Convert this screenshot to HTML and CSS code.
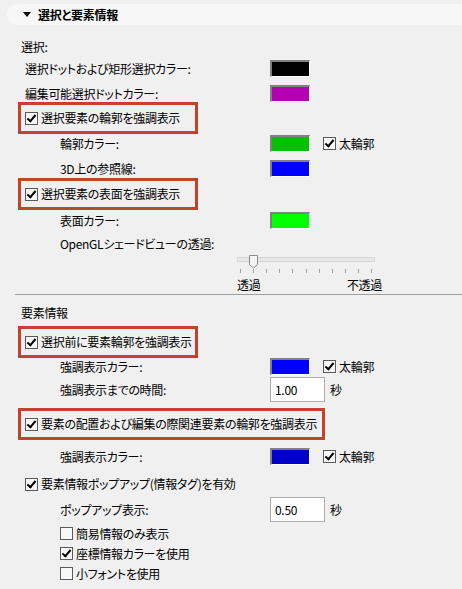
FILE: index.html
```html
<!DOCTYPE html>
<html lang="ja">
  <head>
    <meta charset="UTF-8" />
    <title>選択と要素情報</title>
    <link rel="stylesheet" href="styles.css">
  </head>
  <body>
    <div class="panel-head">
      <span class="caret"></span>
      <span class="panel-title">選択と要素情報</span>
    </div>

    <div class="cap cap-first">選択:</div>
    <div class="row first">
      <span class="label">選択ドットおよび矩形選択カラー:</span>
      <span class="swatch black"></span>
    </div>
    <div class="row">
      <span class="label">編集可能選択ドットカラー:</span>
      <span class="swatch magenta"></span>
    </div>
    <div class="hl">
      <span class="cb on"></span>選択要素の輪郭を強調表示
    </div>
    <div class="row sub after-hl">
      <span class="label">輪郭カラー:</span>
      <span class="swatch green"></span>
      <span class="check"><span class="cb on"></span>太輪郭</span>
    </div>
    <div class="row sub">
      <span class="label">3D上の参照線:</span>
      <span class="swatch blue"></span>
    </div>
    <div class="hl hl-2">
      <span class="cb on"></span>選択要素の表面を強調表示
    </div>
    <div class="row sub after-hl2">
      <span class="label">表面カラー:</span>
      <span class="swatch lime"></span>
    </div>
    <div class="cap sub-cap">OpenGLシェードビューの透過:</div>
    <div class="slider">
      <svg width="142" height="20" viewBox="0 0 142 20">
        <rect x="1.5" y="3.5" width="137" height="4" fill="#e7e7e7" stroke="#d6d6d6" />
        <g stroke="#a0a0a0">
          <line x1="4.5" y1="15" x2="4.5" y2="19" />
          <line x1="17.5" y1="15" x2="17.5" y2="19" />
          <line x1="30.5" y1="15" x2="30.5" y2="19" />
          <line x1="43.5" y1="15" x2="43.5" y2="19" />
          <line x1="56.5" y1="15" x2="56.5" y2="19" />
          <line x1="70.5" y1="15" x2="70.5" y2="19" />
          <line x1="83.5" y1="15" x2="83.5" y2="19" />
          <line x1="96.5" y1="15" x2="96.5" y2="19" />
          <line x1="109.5" y1="15" x2="109.5" y2="19" />
          <line x1="122.5" y1="15" x2="122.5" y2="19" />
          <line x1="135.5" y1="15" x2="135.5" y2="19" />
        </g>
        <path d="M13.5 1.5 H21.5 V10.5 L17.5 14 L13.5 10.5 Z" fill="#f4f4f4" stroke="#8a8a8a" />
      </svg>
    </div>
    <div class="slider-labels">
      <span>透過</span>
      <span>不透過</span>
    </div>

    <hr class="sep" />

    <div class="cap cap-info">要素情報</div>
    <div class="hl hl-3">
      <span class="cb on"></span>選択前に要素輪郭を強調表示
    </div>
    <div class="row sub after-hl3">
      <span class="label">強調表示カラー:</span>
      <span class="swatch blue"></span>
      <span class="check"><span class="cb on"></span>太輪郭</span>
    </div>
    <div class="row sub field-row">
      <span class="label">強調表示までの時間:</span>
      <span class="field">1.00</span>
      <span class="unit">秒</span>
    </div>
    <div class="hl hl-wide">
      <span class="cb on"></span>要素の配置および編集の際関連要素の輪郭を強調表示
    </div>
    <div class="row sub">
      <span class="label">強調表示カラー:</span>
      <span class="swatch navy"></span>
      <span class="check"><span class="cb on"></span>太輪郭</span>
    </div>
    <div class="check popup">
      <span class="cb on"></span>要素情報ポップアップ(情報タグ)を有効
    </div>
    <div class="row sub field-row popup-field">
      <span class="label">ポップアップ表示:</span>
      <span class="field">0.50</span>
      <span class="unit">秒</span>
    </div>
    <div class="check opt first-opt"><span class="cb"></span>簡易情報のみ表示</div>
    <div class="check opt"><span class="cb on"></span>座標情報カラーを使用</div>
    <div class="check opt"><span class="cb"></span>小フォントを使用</div>
  </body>
</html>
```

FILE: styles.css
```css
body {
  margin: 0;
  background: #f0f0f0;
  color: #000;
  font-family: "Noto Sans CJK JP", "Noto Sans", sans-serif;
  font-feature-settings: "palt";
  font-size: 12px;
  line-height: 16px;
  letter-spacing: -0.3px;
  width: 462px;
  height: 589px;
  overflow: hidden;
}

.panel-head {
  margin: 4px 0 0 7px;
  height: 21px;
  background: #f7f7f7;
  border-radius: 10px 0 0 10px;
  display: flex;
  align-items: center;
}
.caret {
  width: 0;
  height: 0;
  margin-left: 16px;
  border-left: 4px solid transparent;
  border-right: 4px solid transparent;
  border-top: 5px solid #000;
}
.panel-title {
  margin-left: 7px;
  font-weight: bold;
}

.cap {
  height: 16px;
  padding-left: 21px;
}
.cap-first {
  margin-top: 14px;
}
.sub-cap {
  margin-top: 7px;
  padding-left: 60px;
}
.cap-info {
  margin-top: 10px;
}

.row {
  display: grid;
  grid-template-columns: 270px auto auto 1fr;
  align-items: center;
  height: 17px;
  margin-top: 8px;
}
.row .label {
  padding-left: 25px;
}
.row.sub .label {
  padding-left: 60px;
}
.row.first {
  margin-top: 5px;
}
.after-hl {
  margin-top: 1px;
}
.after-hl2 {
  margin-top: 2px;
}
.after-hl3 {
  margin-top: 0;
}
.field-row {
  height: 25px;
  margin-top: 2px;
}
.popup-field {
  margin-top: 5px;
}

.swatch {
  width: 40px;
  height: 17px;
  box-sizing: border-box;
  border-top: 2px solid #808080;
  border-left: 2px solid #808080;
  border-right: 1px solid #fff;
  border-bottom: 1px solid #fff;
  margin-right: 13px;
}
.black { background: #000; }
.magenta { background: #b400b4; }
.green { background: #00c000; }
.blue { background: #0000ff; }
.lime { background: #00ff00; }
.navy { background: #0000c8; }

.field {
  width: 55px;
  height: 25px;
  box-sizing: border-box;
  background: #fff;
  border: 1px solid #adadad;
  padding-left: 4px;
  line-height: 23px;
  margin-right: 5px;
}

.cb {
  display: inline-block;
  position: relative;
  width: 13px;
  height: 13px;
  box-sizing: border-box;
  border: 1px solid #5a5a5a;
  background: #f8f8f8;
  margin-right: 3px;
  flex: none;
}
.cb.on::after {
  content: "";
  position: absolute;
  left: 3px;
  top: 0px;
  width: 3px;
  height: 7px;
  border-right: 2px solid #000;
  border-bottom: 2px solid #000;
  transform: rotate(40deg);
}

.check {
  display: flex;
  align-items: center;
}

.hl {
  display: flex;
  align-items: center;
  width: 180px;
  height: 32px;
  box-sizing: border-box;
  margin-left: 18px;
  padding-left: 4px;
  border: 3px solid #c0432c;
  white-space: nowrap;
}
.hl-2 {
  margin-top: 1px;
}
.hl-3 {
  margin-top: 5px;
}
.hl-wide {
  width: 307px;
  margin-top: 6px;
}

.slider {
  margin: 2px 0 0 236px;
  height: 20px;
}
.slider svg {
  display: block;
}
.slider-labels {
  display: flex;
  justify-content: space-between;
  width: 145px;
  margin: 3px 0 0 237px;
  height: 16px;
}

.sep {
  margin: 1px 0 0 15px;
  border: none;
  border-top: 1px solid #a0a0a0;
  height: 0;
}

.popup {
  margin: 11px 0 0 25px;
  height: 16px;
}
.opt {
  margin: 5px 0 0 60px;
  height: 15px;
}
.first-opt {
  margin-top: 4px;
}
```
